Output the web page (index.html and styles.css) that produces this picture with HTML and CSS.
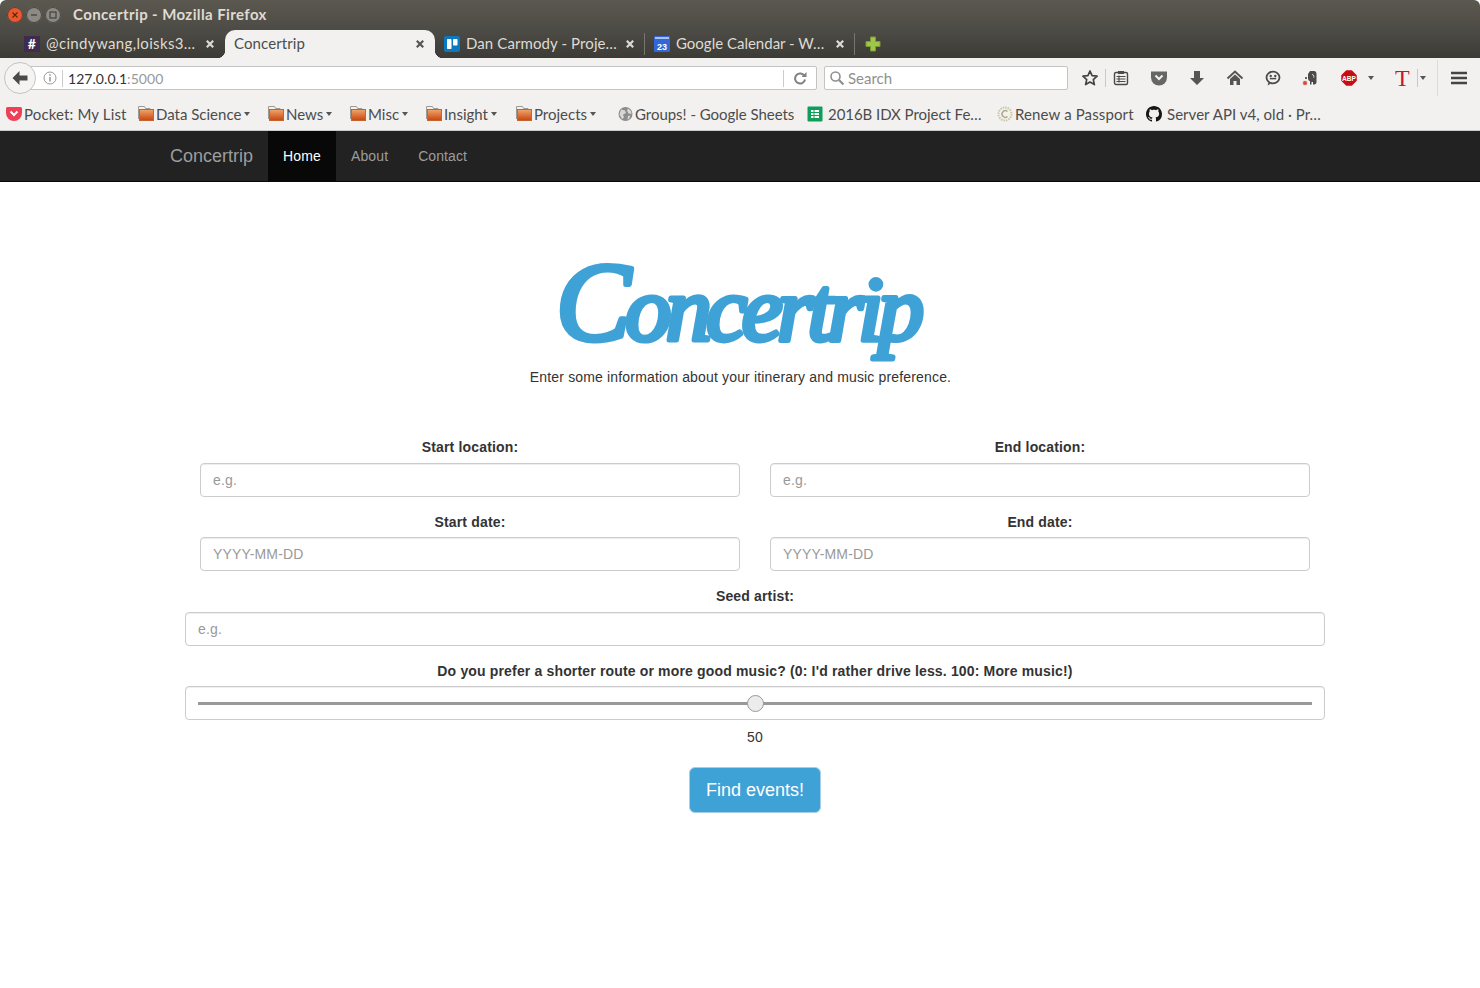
FILE: index.html
```html
<!DOCTYPE html>
<html lang="en">
<head>
    <meta charset="UTF-8" />
    <title>Concertrip</title>
    <link rel="stylesheet" href="styles.css">
</head>
<body>
<svg class="defs" width="0" height="0">
    <defs>
        <linearGradient id="folderfill" x1="0" y1="0" x2="0" y2="1">
            <stop offset="0" stop-color="#f2a56c"/>
            <stop offset="1" stop-color="#c4460f"/>
        </linearGradient>
    </defs>
    <symbol id="folder" viewBox="0 0 16 16">
        <path d="M.5 13V.5h6l1 2h4.500v2" fill="#f4f2ee" stroke="#9c9a94" stroke-width="1"/>
        <rect x="1.500" y="3.500" width="14" height="11" fill="url(#folderfill)" stroke="#c8622e" stroke-width="1"/>
    </symbol>
    <symbol id="close" viewBox="0 0 10 10">
        <path d="M1.800 1.800l6.400 6.400M8.200 1.800l-6.400 6.400" stroke="currentColor" stroke-width="2.200" fill="none"/>
    </symbol>
</svg>

<header class="chrome">
    <div class="titlebar">
        <div class="win-btns">
            <span class="win-btn win-close"><svg width="8" height="8" viewBox="0 0 8 8"><path d="M1.500 1.500l5 5M6.500 1.500l-5 5" stroke="#5c2410" stroke-width="1.100"/></svg></span>
            <span class="win-btn"><svg width="8" height="8" viewBox="0 0 8 8"><path d="M1 4h6" stroke="#3c3b37" stroke-width="1.200"/></svg></span>
            <span class="win-btn"><svg width="8" height="8" viewBox="0 0 8 8"><rect x="1" y="1" width="6" height="6" fill="none" stroke="#3c3b37" stroke-width="1.100"/></svg></span>
        </div>
        <div class="win-title">Concertrip - Mozilla Firefox</div>
    </div>

    <div class="tabs">
        <div class="tab">
            <span class="tab-icon icon-slack">#</span>
            <span class="tab-label">@cindywang,loisks3…</span>
            <svg class="tab-close"><use href="#close"/></svg>
        </div>
        <div class="tab tab-active">
            <span class="tab-label">Concertrip</span>
            <svg class="tab-close"><use href="#close"/></svg>
        </div>
        <div class="tab tab-sep">
            <svg class="tab-icon" viewBox="0 0 16 16"><rect width="16" height="16" rx="2" fill="#0b79bf"/><rect x="3" y="3" width="4.500" height="10" rx=".8" fill="#fff"/><rect x="9" y="3" width="4.500" height="6.500" rx=".8" fill="#fff"/></svg>
            <span class="tab-label">Dan Carmody - Proje…</span>
            <svg class="tab-close"><use href="#close"/></svg>
        </div>
        <div class="tab tab-sep">
            <svg class="tab-icon" viewBox="0 0 16 16"><rect width="16" height="16" rx="1" fill="#3367d6"/><rect x="1" y="1" width="14" height="2" fill="#a9c0ee"/><text x="8" y="13.500" class="cal-day">23</text></svg>
            <span class="tab-label">Google Calendar - W…</span>
            <svg class="tab-close"><use href="#close"/></svg>
        </div>
        <svg class="tab-new" width="16" height="16" viewBox="0 0 16 16"><path d="M5.500 1h5v4.500H15v5h-4.500V15h-5v-4.500H1v-5h4.500z" fill="#9fc54a" stroke="#7b9c32" stroke-width="1"/></svg>
    </div>

    <div class="toolbar">
        <div class="back-btn">
            <svg width="16" height="16" viewBox="0 0 16 16"><path d="M7.500 1L.5 8l7 7v-4.500h8v-5h-8z" fill="#4a4a4a"/></svg>
        </div>
        <div class="urlbar">
            <svg class="info" width="14" height="14" viewBox="0 0 14 14"><circle cx="7" cy="7" r="6" fill="none" stroke="#9a9a9a"/><path d="M7 6v4.500M7 3.300v1.500" stroke="#8a8a8a" stroke-width="1.400"/></svg>
            <span class="url-text">127.0.0.1<span class="url-port">:5000</span></span>
            <span class="reload">
                <svg width="14" height="14" viewBox="0 0 14 14"><path d="M11.500 5.200A5 5 0 1 0 12 8.500" fill="none" stroke="#808080" stroke-width="2"/><path d="M8.500 6h5V1z" fill="#808080"/></svg>
            </span>
        </div>
        <div class="searchbar">
            <svg width="16" height="16" viewBox="0 0 16 16"><circle cx="6.500" cy="6.500" r="4.500" fill="none" stroke="#8f8f8f" stroke-width="1.600"/><path d="M10 10l4.500 4.500" stroke="#8f8f8f" stroke-width="2.200"/></svg>
            <span>Search</span>
        </div>
        <div class="tool-icons">
            <svg class="ti-star" width="18" height="18" viewBox="0 0 18 18"><path d="M9 2l2.100 4.700 5 .5-3.800 3.400 1.100 5L9 13l-4.400 2.600 1.100-5L1.900 7.200l5-.5z" fill="none" stroke="#444" stroke-width="1.700" stroke-linejoin="round"/></svg>
            <span class="ti-star-sep"></span>
            <svg class="ti-list" width="16" height="16" viewBox="0 0 16 16"><rect x="1.500" y="2.500" width="13" height="12" rx="1.500" fill="none" stroke="#4a4a4a" stroke-width="1.400"/><rect x="5" y="1" width="6" height="3" fill="#4a4a4a"/><path d="M3.500 6.500h9M3.500 9h9M3.500 11.500h9M6 5.500v7" stroke="#4a4a4a" stroke-width="1.100"/></svg>
            <svg class="ti-pocket" width="18" height="16" viewBox="0 0 18 16"><path d="M1 1.500h16v6a8 8 0 0 1-16 0z" fill="#666"/><path d="M5.500 5.500L9 9l3.500-3.500" fill="none" stroke="#f2f1f0" stroke-width="2"/></svg>
            <svg class="ti-down" width="16" height="16" viewBox="0 0 16 16"><path d="M5 1h6v7h4l-7 7-7-7h4z" fill="#555"/></svg>
            <svg class="ti-home" width="18" height="16" viewBox="0 0 18 16"><path d="M1.500 8.500L9 1.500l7.500 7" fill="none" stroke="#555" stroke-width="2"/><path d="M4 9l5-4.500L14 9v6h-3.500v-4h-3v4H4z" fill="#555"/></svg>
            <svg class="ti-smile" width="16" height="16" viewBox="0 0 16 16"><ellipse cx="8" cy="7.500" rx="6.500" ry="5.800" fill="none" stroke="#4a4a4a" stroke-width="1.800"/><path d="M3.500 12.500L2.500 15.500 6 13.500z" fill="#4a4a4a"/><circle cx="5.700" cy="6" r="1.200" fill="#4a4a4a"/><circle cx="10.300" cy="6" r="1.200" fill="#4a4a4a"/><path d="M4.800 8.600h6.400" stroke="#4a4a4a" stroke-width="1.500"/></svg>
            <svg class="ti-note" width="16" height="16" viewBox="0 0 16 16"><path d="M6 4l2-3h4c1.500 0 2.500 1.200 2.500 3v8c0 1.500-1 2.500-2 2.500h-1.500V12H9.500v2.500H8V11C6.500 11 6 9.500 6 8z" fill="#4a4a4a"/><path d="M10 4.500c1.500 0 2 1 1.800 3" fill="none" stroke="#f2f1f0" stroke-width=".9"/><rect x="1" y="11" width="4" height="4" rx="1.200" fill="#d9483b" stroke="#e8b0a8" stroke-width=".6"/><rect x="3" y="7" width="2" height="2" fill="#666"/></svg>
            <svg class="ti-abp" width="16" height="16" viewBox="0 0 16 16"><path d="M5.500 1h5l4.500 4.500v5L10.500 15h-5L1 10.500v-5z" fill="#c70d13" stroke="#c70d13" stroke-width="1.500" stroke-linejoin="round"/><text x="8" y="10.700" textLength="14" lengthAdjust="spacingAndGlyphs" class="abp-text">ABP</text></svg>
            <span class="caret ti-caret"></span>
            <span class="ti-t">T</span>
            <span class="ti-sep"></span>
            <span class="caret ti-caret2"></span>
            <span class="ti-sep2"></span>
            <svg class="ti-menu" width="16" height="14" viewBox="0 0 16 14"><path d="M0 2h16M0 7h16M0 12h16" stroke="#444" stroke-width="2.400"/></svg>
        </div>
    </div>

    <div class="bookmarks">
        <div class="bm bm-pocket">
            <svg width="16" height="16" viewBox="0 0 16 16"><path d="M0 2.500A1.500 1.500 0 0 1 1.500 1h13A1.500 1.500 0 0 1 16 2.500V7A8 8 0 0 1 0 7z" fill="#ee4056"/><path d="M4.500 5.500L8 9l3.500-3.500" fill="none" stroke="#fff" stroke-width="2"/></svg>
            <span>Pocket: My List</span>
        </div>
        <div class="bm bm-data"><svg width="16" height="16"><use href="#folder"/></svg><span>Data Science</span><i class="caret"></i></div>
        <div class="bm bm-news"><svg width="16" height="16"><use href="#folder"/></svg><span>News</span><i class="caret"></i></div>
        <div class="bm bm-misc"><svg width="16" height="16"><use href="#folder"/></svg><span>Misc</span><i class="caret"></i></div>
        <div class="bm bm-insight"><svg width="16" height="16"><use href="#folder"/></svg><span>Insight</span><i class="caret"></i></div>
        <div class="bm bm-projects"><svg width="16" height="16"><use href="#folder"/></svg><span>Projects</span><i class="caret"></i></div>
        <div class="bm bm-groups">
            <svg width="15" height="16" viewBox="0 0 15 16"><circle cx="7.500" cy="8" r="7" fill="#8c8c8c"/><path d="M3 3.500l4 1 1 2.500-3 1.500 1 3-2 1.500-2.500-4.500zM10 2.500l3 2.500.5 3-3-.5-1.500-3zM10 10l2.500-.5-1.500 3.500-1.500.5z" fill="#d8d8d8"/></svg>
            <span>Groups! - Google Sheets</span>
        </div>
        <div class="bm bm-idx">
            <svg width="16" height="16" viewBox="0 0 16 16"><rect width="15" height="15" x=".5" y=".5" rx="1" fill="#0f9d58"/><path d="M3.500 3.500h9v9h-9z M3.500 6.500h9M3.500 9.500h9M7 3.500v9" fill="#fff" stroke="#0f9d58" stroke-width="1"/></svg>
            <span>2016B IDX Project Fe…</span>
        </div>
        <div class="bm bm-renew">
            <svg width="16" height="16" viewBox="0 0 16 16"><circle cx="8" cy="8" r="6.500" fill="#f6f3e4" stroke="#c9c5ab" stroke-width="2" stroke-dasharray="1.500 1"/><path d="M10.500 5.500A3.300 3.300 0 1 0 10.500 10.500" fill="none" stroke="#a8a8a0" stroke-width="1.500"/></svg>
            <span>Renew a Passport</span>
        </div>
        <div class="bm bm-github">
            <svg width="16" height="16" viewBox="0 0 16 16"><path d="M8 0C3.580 0 0 3.580 0 8c0 3.540 2.290 6.530 5.470 7.590.4.070.55-.17.55-.38 0-.19-.01-.82-.01-1.490-2.010.37-2.530-.49-2.690-.94-.09-.23-.48-.94-.82-1.130-.28-.15-.68-.52-.01-.53.63-.01 1.080.58 1.230.82.720 1.210 1.870.87 2.330.66.070-.52.280-.87.510-1.070-1.780-.2-3.640-.89-3.640-3.950 0-.87.310-1.590.820-2.150-.08-.2-.36-1.020.08-2.120 0 0 .67-.21 2.200.82.640-.18 1.320-.27 2-.27s1.360.09 2 .27c1.530-1.040 2.200-.82 2.200-.82.440 1.100.160 1.920.080 2.120.51.560.82 1.270.82 2.150 0 3.070-1.870 3.750-3.650 3.950.29.250.54.730.54 1.480 0 1.070-.01 1.930-.01 2.200 0 .21.150.46.550.38A8.010 8.010 0 0 0 16 8c0-4.420-3.580-8-8-8z" fill="#161616"/></svg>
            <span>Server API v4, old · Pr…</span>
        </div>
    </div>
</header>

<nav class="site-nav">
    <div class="container nav-inner">
        <a class="brand">Concertrip</a>
        <a class="nav-link nav-current">Home</a>
        <a class="nav-link">About</a>
        <a class="nav-link">Contact</a>
    </div>
</nav>

<main class="container">
    <div class="hero">
        <svg class="logo" width="380" height="126" viewBox="0 0 380 126">
            <text x="6" y="99" textLength="368" lengthAdjust="spacing" class="logo-text"><tspan class="logo-cap">C</tspan>oncertrip</text>
        </svg>
        <p class="tagline">Enter some information about your itinerary and music preference.</p>
    </div>

    <form class="trip-form">
        <div class="row row-first">
            <div class="col">
                <label for="start">Start location:</label>
                <input class="field" type="text" id="start" placeholder="e.g." />
            </div>
            <div class="col">
                <label for="end">End location:</label>
                <input class="field" type="text" id="end" placeholder="e.g." />
            </div>
        </div>
        <div class="row">
            <div class="col">
                <label for="startdate">Start date:</label>
                <input class="field" type="text" id="startdate" placeholder="YYYY-MM-DD" />
            </div>
            <div class="col">
                <label for="enddate">End date:</label>
                <input class="field" type="text" id="enddate" placeholder="YYYY-MM-DD" />
            </div>
        </div>
        <div class="group group-seed">
            <label for="artist">Seed artist:</label>
            <input class="field" type="text" id="artist" placeholder="e.g." />
        </div>
        <div class="group group-slider">
            <label for="pref">Do you prefer a shorter route or more good music? (0: I'd rather drive less. 100: More music!)</label>
            <div class="field slider-box">
                <input class="slider" type="range" id="pref" min="0" max="100" value="50" />
            </div>
        </div>
        <div class="slider-value">50</div>
        <button class="find-btn" type="button">Find events!</button>
    </form>
</main>
</body>
</html>
```
FILE: styles.css
```css
* {
    box-sizing: border-box;
}

body {
    margin: 0;
    background: #fff;
    font-family: "Liberation Sans", Arial, sans-serif;
    font-size: 14px;
    line-height: 20px;
    letter-spacing: .16px;
    color: #333;
}

.defs {
    display: block;
    height: 0;
}

/* browser chrome */
.chrome {
    font-family: Lato, "Noto Sans", sans-serif;
    letter-spacing: 0;
}

.titlebar {
    height: 30px;
    display: flex;
    align-items: center;
    padding-left: 7px;
    background: linear-gradient(#5b5850, #4d4b45);
    border-radius: 6px 6px 0 0;
}

.win-btns {
    display: flex;
    gap: 3px;
}

.win-btn {
    width: 16px;
    height: 16px;
    border-radius: 50%;
    background: #8c8a83;
    box-shadow: inset 0 0 0 1px #4a4843;
    display: flex;
    align-items: center;
    justify-content: center;
}

.win-close {
    background: #e9592c;
}

.win-title {
    margin: -2px 0 0 12px;
    font-size: 15px;
    font-weight: 700;
    letter-spacing: .4px;
    color: #dfdbd2;
}

.tabs {
    height: 28px;
    display: flex;
    align-items: center;
    padding-left: 15px;
    background: linear-gradient(#4d4b45, #3c3b37);
    color: #dfdbd2;
    font-size: 15px;
    letter-spacing: .1px;
}

.tab {
    width: 210px;
    height: 28px;
    display: flex;
    align-items: center;
    padding-left: 9px;
    position: relative;
}

.tab:nth-child(1) { letter-spacing: .35px; }
.tab:nth-child(4) { letter-spacing: 0; }

.tab-icon {
    width: 16px;
    height: 16px;
    flex: none;
    margin-right: 6px;
}

.icon-slack {
    background: #3f2b4d;
    color: #fff;
    font-size: 14px;
    font-weight: 700;
    line-height: 16px;
    text-align: center;
}

.tab-label {
    flex: 1;
    margin-top: -2px;
    white-space: nowrap;
    overflow: hidden;
}

.tab-close {
    width: 10px;
    height: 10px;
    flex: none;
    margin: 0 10px 0 5px;
    color: #dfdbd2;
}

.tab-active {
    background: #f2f1f0;
    color: #4c4c4c;
    border-radius: 10px 10px 0 0;
}

.tab-active .tab-close {
    color: #555;
}

.tab-active::before,
.tab-active::after {
    content: "";
    position: absolute;
    bottom: 0;
    width: 8px;
    height: 8px;
}

.tab-active::before {
    left: -8px;
    background: radial-gradient(circle at 0 0, transparent 8px, #f2f1f0 8.500px);
}

.tab-active::after {
    right: -8px;
    background: radial-gradient(circle at 100% 0, transparent 8px, #f2f1f0 8.500px);
}

.tab-sep::after {
    content: "";
    position: absolute;
    right: 0;
    top: 3px;
    bottom: 3px;
    width: 1px;
    background: #77756e;
}

.cal-day {
    font-size: 9px;
    font-weight: 700;
    fill: #fff;
    text-anchor: middle;
    font-family: "Liberation Sans", sans-serif;
}

.tab-new {
    margin-left: 10px;
}

.toolbar {
    height: 40px;
    display: flex;
    align-items: center;
    background: #f2f1f0;
    padding-left: 4px;
    position: relative;
    font-size: 15px;
}

.back-btn {
    width: 32px;
    height: 32px;
    flex: none;
    border: 1px solid #c4c4c4;
    border-radius: 50%;
    background: #f5f4f3;
    display: flex;
    align-items: center;
    justify-content: center;
    position: relative;
    z-index: 1;
}

.urlbar {
    width: 789px;
    height: 24px;
    margin-left: -8px;
    padding-left: 14px;
    display: flex;
    align-items: center;
    background: #fff;
    border: 1px solid #c4c4c4;
    border-radius: 0 2px 2px 0;
}

.info {
    flex: none;
}

.url-text {
    flex: 1;
    margin-left: 5px;
    padding-left: 5px;
    border-left: 1px solid #ccc;
    font-size: 14px;
    line-height: 17px;
    letter-spacing: .05px;
    color: #333;
}

.url-port {
    color: #999;
}

.reload {
    width: 33px;
    height: 17px;
    border-left: 1px solid #ccc;
    display: flex;
    align-items: center;
    justify-content: center;
}

.searchbar {
    width: 244px;
    height: 24px;
    margin-left: 7px;
    padding-left: 4px;
    display: flex;
    align-items: center;
    gap: 3px;
    background: #fff;
    border: 1px solid #c4c4c4;
    border-radius: 2px;
    color: #8f8f8f;
}

.tool-icons {
    flex: 1;
    height: 40px;
    display: flex;
    align-items: center;
}

.tool-icons > * {
    flex: none;
}

.ti-star { margin-left: 13px; }
.ti-list { margin-left: 7px; }
.ti-pocket { margin-left: 21px; }
.ti-down { margin-left: 21px; }
.ti-home { margin-left: 21px; }
.ti-smile { margin-left: 21px; }
.ti-note { margin-left: 21px; }
.ti-abp { margin-left: 23px; }
.ti-caret { margin-left: 11px; }
.ti-caret2 { margin-left: 2px; }

.abp-text {
    font-family: "Liberation Sans", sans-serif;
    font-size: 7.500px;
    font-weight: 700;
    fill: #fff;
    text-anchor: middle;
}

.ti-star-sep {
    width: 1px;
    height: 18px;
    margin-left: 6px;
    background: #c8c8c8;
}

.ti-t {
    margin-left: 21px;
    font-family: "Liberation Serif", serif;
    font-size: 24px;
    line-height: 24px;
    color: #c8162f;
}

.ti-sep {
    width: 1px;
    height: 18px;
    margin-left: 7px;
    background: #c8c8c8;
}

.ti-sep2 {
    width: 1px;
    height: 36px;
    margin-left: 11px;
    background: #dcdbda;
}

.ti-menu {
    margin-left: 13px;
}

.caret {
    display: inline-block;
    width: 0;
    height: 0;
    border-left: 3px solid transparent;
    border-right: 3px solid transparent;
    border-top: 4px solid #555;
}

.bookmarks {
    height: 33px;
    display: flex;
    align-items: center;
    padding-left: 6px;
    background: #f2f1f0;
    border-bottom: 1px solid #ccc;
    color: #4c4c4c;
    font-size: 15px;
}

.bm {
    display: flex;
    align-items: center;
    flex: none;
    white-space: nowrap;
}

.bm svg {
    flex: none;
    margin-right: 2px;
}

.bm .caret {
    margin-left: 3px;
}

.bm-pocket { width: 132px; letter-spacing: .14px; }
.bm-data { width: 130px; }
.bm-news { width: 82px; }
.bm-misc { width: 76px; }
.bm-insight { width: 90px; }
.bm-projects { width: 102px; }
.bm-groups { width: 189px; letter-spacing: -.03px; }
.bm-idx { width: 190px; letter-spacing: -.05px; }
.bm-renew { width: 149px; letter-spacing: .13px; }
.bm-github { letter-spacing: .04px; }

.bm-idx svg { margin-right: 5px; }
.bm-github svg { margin-right: 5px; }

/* page */
.container {
    width: 1170px;
    margin: 0 auto;
}

.site-nav {
    height: 51px;
    background: #222;
    border-bottom: 1px solid #080808;
}

.nav-inner {
    display: flex;
    height: 50px;
}

.brand {
    padding: 15px;
    font-size: 18px;
    letter-spacing: 0;
    color: #9d9d9d;
}

.nav-link {
    padding: 15px;
    letter-spacing: .1px;
    color: #9d9d9d;
}

.nav-current {
    background: #080808;
    color: #fff;
    letter-spacing: .16px;
}

.hero {
    padding-top: 59px;
    text-align: center;
    height: 256px;
}

.logo {
    display: block;
    margin: 0 auto;
    overflow: visible;
}

.logo-text {
    font-family: "Liberation Serif", serif;
    font-size: 92px;
    font-style: italic;
    font-weight: 400;
    fill: #3fa2d7;
    stroke: #3fa2d7;
    stroke-width: 5px;
    stroke-linejoin: round;
    letter-spacing: 0;
}

.logo-cap {
    font-size: 112px;
}

.tagline {
    margin: 0;
    padding-left: 1px;
}

.trip-form {
    margin-left: 30px;
    text-align: center;
}

.row {
    display: grid;
    grid-template-columns: 1fr 1fr;
}

.col {
    padding: 0 15px;
    margin-bottom: 15px;
}

label {
    display: block;
    margin-bottom: 5px;
    font-weight: 700;
}

/* label sits a pixel higher on these rows */
.row-first label {
    margin-top: -1px;
    margin-bottom: 6px;
}

.group-seed label {
    margin-bottom: 6px;
}

.group {
    margin-bottom: 15px;
}

.group-slider {
    margin-bottom: 7px;
}

.field {
    display: block;
    width: 100%;
    height: 34px;
    padding: 6px 12px;
    border: 1px solid #ccc;
    border-radius: 4px;
    background: #fff;
    font: inherit;
    letter-spacing: inherit;
    color: #555;
    box-shadow: inset 0 1px 1px rgba(0, 0, 0, 0.075);
}

.field::placeholder {
    color: #999;
    opacity: 1;
}

.slider-box {
    display: flex;
    align-items: center;
}

.slider {
    -webkit-appearance: none;
    appearance: none;
    width: 100%;
    height: 17px;
    margin: 0;
    background: transparent;
}

.slider::-webkit-slider-runnable-track {
    height: 3px;
    background: #999;
}

.slider::-webkit-slider-thumb {
    -webkit-appearance: none;
    width: 17px;
    height: 17px;
    margin-top: -7px;
    border: 1px solid #999;
    border-radius: 50%;
    background: #ececec;
}

.slider-value {
    height: 20px;
    color: #333;
}

.find-btn {
    display: block;
    margin: 20px auto 0;
    width: 132px;
    height: 46px;
    padding: 10px 0;
    border: 1px solid #a9cfe6;
    border-radius: 6px;
    background: #3fa2d7;
    color: #fff;
    font: inherit;
    font-size: 18px;
    line-height: 24px;
}
```
